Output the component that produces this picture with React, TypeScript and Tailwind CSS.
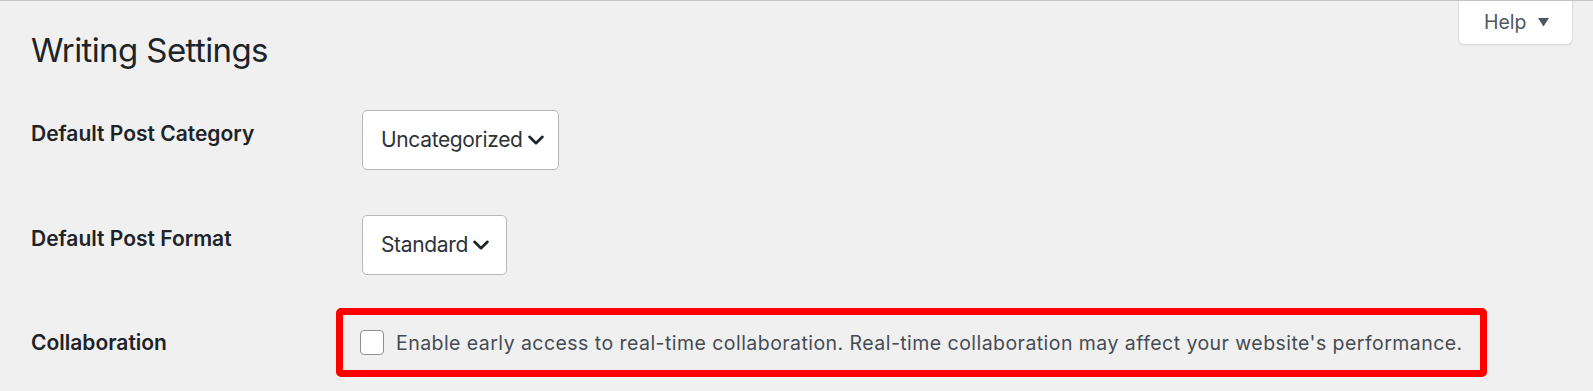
import React from "react";

function Chevron() {
  return (
    <svg width="16" height="10" viewBox="0 0 16 10" className="shrink-0">
      <path d="M1.5 1.8 L8 8.2 L14.5 1.8" fill="none" stroke="#1d2327" strokeWidth="2.6" strokeLinecap="round" strokeLinejoin="round" />
    </svg>
  );
}

export default function App() {
  return (
    <div className="relative w-[1593px] h-[391px] overflow-hidden bg-[#f0f0f1] border-t border-[#c3c4c7] font-['Inter','Liberation_Sans',sans-serif]">
      <div className="absolute top-0 right-[20px] w-[115px] h-[44px] bg-white border border-t-0 border-[#dcdcde] rounded-b-[6px] shadow-[0_1px_1px_rgba(0,0,0,0.04)] flex items-center pl-[25px] gap-[11px] text-[19.5px] text-[#50575e]">
        <span className="leading-none">Help</span>
        <svg width="11" height="9" viewBox="0 0 11 9">
          <path d="M0 0 H11 L5.5 8.5 Z" fill="#50575e" />
        </svg>
      </div>

      <div className="pl-[31px]">
        <h1 className="mt-[26px] text-[33px] leading-[46px] tracking-[-0.6px] font-normal text-[#1d2327]">Writing Settings</h1>

        <div className="flex mt-[37px]">
          <div className="w-[331px] pt-[9px] text-[21px] leading-[30px] font-semibold text-[#1d2327]">Default Post Category</div>
          <div className="h-[60px] inline-flex items-center gap-[5px] pl-[18px] pr-[14px] bg-white border-[1.5px] border-[#b6b8bb] rounded-[5px] text-[21px] tracking-[-0.35px] text-[#2c3338]">
            <span>Uncategorized</span>
            <Chevron />
          </div>
        </div>

        <div className="flex mt-[45px]">
          <div className="w-[331px] pt-[9px] text-[21px] leading-[30px] font-semibold text-[#1d2327]">Default Post Format</div>
          <div className="h-[60px] inline-flex items-center gap-[5px] pl-[18px] pr-[17px] bg-white border-[1.5px] border-[#b6b8bb] rounded-[5px] text-[21px] tracking-[-0.35px] text-[#2c3338]">
            <span>Standard</span>
            <Chevron />
          </div>
        </div>

        <div className="flex items-center mt-[33px]">
          <div className="w-[305px] text-[21px] leading-[30px] font-semibold text-[#1d2327]">Collaboration</div>
          <div className="w-[1151px] h-[69px] border-[7px] border-[#ff0000] rounded-[5px] flex items-center pl-[17px]">
            <div className="w-[24px] h-[25px] bg-white border-[1.5px] border-[#8c8f94] rounded-[4px] shrink-0" />
            <span className="ml-[12px] text-[19.5px] leading-[28px] tracking-[0.45px] text-[#454b52] whitespace-nowrap">
              Enable early access to real-time collaboration. Real-time collaboration may affect your website's performance.
            </span>
          </div>
        </div>
      </div>
    </div>
  );
}
